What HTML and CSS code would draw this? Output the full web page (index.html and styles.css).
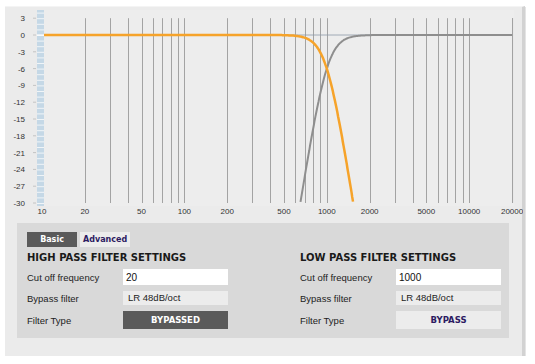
FILE: index.html
```html
<!DOCTYPE html>
<html lang="en">
<head>
    <meta charset="UTF-8">
    <meta name="viewport" content="width=device-width, initial-scale=1.0">
    <title>Crossover Filter Settings</title>
    <link rel="stylesheet" href="styles.css">
</head>
<body>
    <div class="panel">
        <svg id="chart" class="chart" width="518" height="216" viewBox="0 0 518 216"></svg>

        <div class="settings">
            <div class="tabs">
                <div class="tab active">Basic</div>
                <div class="tab">Advanced</div>
            </div>

            <div class="columns">
                <div class="col">
                    <h2>HIGH PASS FILTER SETTINGS</h2>
                    <div class="rows">
                        <div class="label">Cut off frequency</div>
                        <input class="field-input" type="text" value="20">
                        <div class="label">Bypass filter</div>
                        <div class="field-static">LR 48dB/oct</div>
                        <div class="label">Filter Type</div>
                        <div class="type-button on">BYPASSED</div>
                    </div>
                </div>

                <div class="col">
                    <h2>LOW PASS FILTER SETTINGS</h2>
                    <div class="rows">
                        <div class="label">Cut off frequency</div>
                        <input class="field-input" type="text" value="1000">
                        <div class="label">Bypass filter</div>
                        <div class="field-static">LR 48dB/oct</div>
                        <div class="label">Filter Type</div>
                        <div class="type-button">BYPASS</div>
                    </div>
                </div>
            </div>
        </div>
    </div>

    <script src="script.js"></script>
</body>
</html>
```

FILE: styles.css
```css
* {
    margin: 0;
    padding: 0;
    box-sizing: border-box;
}

body {
    font-family: 'Liberation Sans', Arial, sans-serif;
    background: #ffffff;
    padding: 6px 10px 0 5px;
}

.panel {
    width: 520px;
    height: 350px;
    background: #ebebeb;
    border-top: 1px solid #f4f4f4;
    border-right: 3px solid #d2d2d2;
    box-shadow: 1px 1px 0 #e4e4e4;
}

.chart {
    display: block;
}

.settings {
    margin-left: 12px;
    width: 492px;
    height: 115px;
    background: #d9d9d9;
    padding: 9px 10px 0;
}

.tabs {
    display: flex;
    gap: 3px;
    height: 15px;
}

.tab {
    font-family: 'DejaVu Sans', Verdana, sans-serif;
    font-size: 8px;
    font-weight: bold;
    line-height: 15px;
    padding: 0 3px;
    background: #ececec;
    color: #2c1b62;
}

.tab.active {
    width: 50px;
    text-align: center;
    background: #5a5a5a;
    color: #ffffff;
}

.columns {
    display: grid;
    grid-template-columns: 273px 1fr;
}

.col h2 {
    font-family: 'DejaVu Sans', Verdana, sans-serif;
    font-size: 10px;
    font-weight: bold;
    color: #1a1a1a;
    line-height: 14px;
    margin: 4px 0 4px;
    white-space: nowrap;
}

.rows {
    display: grid;
    grid-template-columns: 96px 105px;
    grid-template-rows: 16px 14px 18px;
    row-gap: 6px;
    align-items: center;
}

.label {
    font-size: 9.5px;
    color: #222;
}

.field-input {
    height: 16px;
    border: none;
    background: #ffffff;
    font-family: 'Liberation Sans', Arial, sans-serif;
    font-size: 10px;
    color: #111;
    padding: 0 3px;
    outline: none;
}

.field-static {
    height: 14px;
    background: #ececec;
    font-size: 9.5px;
    line-height: 14px;
    color: #222;
    padding: 0 5px;
}

.type-button {
    height: 18px;
    background: #ececec;
    font-family: 'DejaVu Sans', Verdana, sans-serif;
    font-size: 8.5px;
    font-weight: bold;
    line-height: 18px;
    text-align: center;
    color: #2c1b62;
}

.type-button.on {
    background: #5a5a5a;
    color: #ffffff;
}

.chart text {
    font-family: 'Liberation Sans', Arial, sans-serif;
    font-size: 8px;
    fill: #333;
}
```

FILE: script.js
```js
document.addEventListener('DOMContentLoaded', function() {
    const svg = document.getElementById('chart');
    const NS = 'http://www.w3.org/2000/svg';

    // log frequency axis, 10Hz .. 20kHz
    const X = f => 37 + 142.4 * Math.log10(f / 10);
    const Y = db => 28 - db * 5.6;

    function add(name, attrs, text) {
        const node = document.createElementNS(NS, name);
        for (const k in attrs) node.setAttribute(k, attrs[k]);
        if (text !== undefined) node.textContent = text;
        svg.appendChild(node);
        return node;
    }

    // plot background
    add('rect', { x: 39, y: 3, width: 470, height: 196, fill: '#ededed' });

    // blue level strip
    add('rect', { x: 32, y: 3, width: 7, height: 196, fill: '#c5d8e6' });
    for (let db = 4; db >= -30; db--) {
        add('line', { x1: 32, x2: 39, y1: Y(db) + 0.5, y2: Y(db) + 0.5, stroke: '#ffffff', 'stroke-width': 1, opacity: 0.75 });
    }

    // vertical grid
    const grid = [];
    [10, 100, 1000, 10000].forEach(d => {
        for (let m = 1; m <= 9; m++) grid.push(d * m);
    });
    grid.filter(f => f >= 20 && f <= 20000).forEach(f => {
        const x = Math.round(X(f)) + 0.5;
        add('line', { x1: x, x2: x, y1: Y(3), y2: Y(-30), stroke: '#a3a3a3', 'stroke-width': 1 });
    });
    add('line', { x1: X(20000) + 0.5, x2: X(20000) + 0.5, y1: Y(3), y2: Y(-30), stroke: '#a3a3a3', 'stroke-width': 1 });

    // 0 dB reference
    add('line', { x1: 39, x2: X(20000), y1: Y(0), y2: Y(0), stroke: '#8d99a8', 'stroke-width': 0.8 });
    add('line', { x1: 32, x2: 39, y1: Y(0), y2: Y(0), stroke: '#ffffff', 'stroke-width': 1.2 });

    // y labels + ticks
    for (let db = 3; db >= -30; db -= 3) {
        add('text', { x: 20, y: Y(db) + 3, 'text-anchor': 'end' }, db);
        add('line', { x1: 28, x2: 31, y1: Y(db), y2: Y(db), stroke: '#c4c4c4', 'stroke-width': 1 });
    }

    // x labels
    [10, 20, 50, 100, 200, 500, 1000, 2000, 5000, 10000, 20000].forEach(f => {
        add('text', { x: X(f), y: 207, 'text-anchor': 'middle' }, f);
    });

    // LR 48dB/oct curves
    const lr = r => -20 * Math.log10(1 + Math.pow(r, 8));

    function curve(fn, color, width) {
        const pts = [];
        for (let i = 0; i <= 600; i++) {
            const f = 10 * Math.pow(2000, i / 600);
            const db = fn(f);
            if (db < -30) continue;
            pts.push(Math.max(X(f), 39).toFixed(1) + ',' + Y(db).toFixed(1));
        }
        add('polyline', { points: pts.join(' '), fill: 'none', stroke: color, 'stroke-width': width, 'stroke-linejoin': 'round' });
    }

    curve(f => lr(1000 / f), '#8e8e8e', 2);
    curve(f => lr(f / 1000), '#f6a32a', 2.5);
});
```
